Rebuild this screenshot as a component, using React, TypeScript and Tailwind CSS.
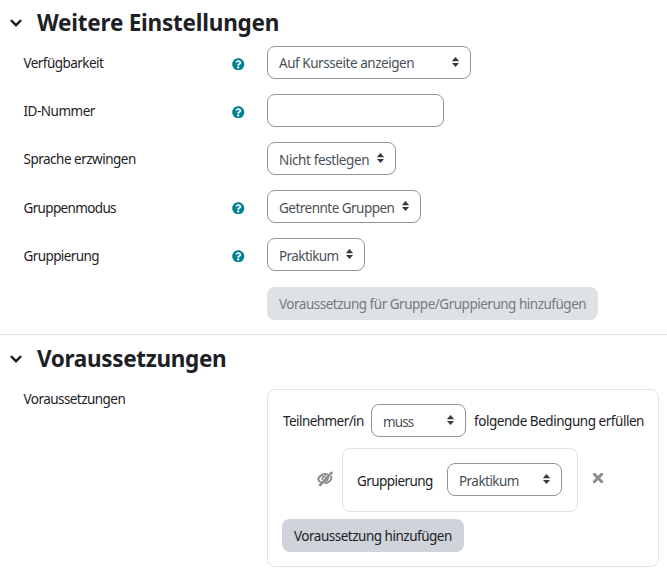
import type { ReactNode } from 'react';
import clsx from 'clsx';
import { FaQuestionCircle } from 'react-icons/fa';

type FieldProps = {
  label: string;
  labelClass: string;
  help?: boolean;
  children: ReactNode;
};

function SortArrows() {
  return (
    <svg viewBox="0 0 7 10" className="w-[7px] h-[10px] shrink-0 relative -top-px" fill="#343a40">
      <path d="M3.5 0 L7.2 4.3 H-0.2 Z" />
      <path d="M-0.2 5.9 H7.2 L3.5 10 Z" />
    </svg>
  );
}

function SelectBox({ value, className, textClass }: { value: string; className: string; textClass: string }) {
  return (
    <button
      className={clsx(
        'h-[33px] shrink-0 border border-[#8f959e] rounded-lg bg-white pl-[11px] pr-[11px] flex items-center justify-between text-[#495057]',
        className
      )}
    >
      <span className={clsx('whitespace-nowrap', textClass)}>{value}</span>
      <SortArrows />
    </button>
  );
}

function SectionTitle({ title, className }: { title: string; className: string }) {
  return (
    <div className="flex items-center h-8">
      <svg viewBox="0 0 12 8" className="w-3 h-2 ml-[10px] mr-[15px]" fill="none" stroke="#1d2125" strokeWidth="2.4">
        <path d="M0.9 1.2 L6 6.2 L11.1 1.2" />
      </svg>
      <h3 className={clsx('font-bold text-[#1d2125] whitespace-nowrap', className)}>{title}</h3>
    </div>
  );
}

function Field({ label, labelClass, help, children }: FieldProps) {
  return (
    <div className="flex items-center h-[33px]">
      <div className="w-[232px] pl-[23.5px]">
        <span className={clsx('whitespace-nowrap', labelClass)}>{label}</span>
      </div>
      <div className="w-[35px]">
        {help && <FaQuestionCircle className="w-[12.5px] h-[12.5px] text-[#008196] relative top-[1.5px]" />}
      </div>
      {children}
    </div>
  );
}

function HiddenEye() {
  return (
    <svg viewBox="0 0 16 16" className="w-4 h-4 relative -top-px" fill="none" stroke="#8c8c8c">
      <path d="M11 3.6 C7 2 2.5 4 1.2 8.3 C1.6 9.8 2.6 10.8 4 11.4" strokeWidth="2" />
      <path d="M14 5.2 C15.4 8.5 12 12 7.4 12.2" strokeWidth="2" />
      <path d="M5.4 9 C4.8 6.6 6.6 5 8.8 5.4" strokeWidth="1.7" />
      <path d="M2.4 14.9 L15.2 1" strokeWidth="2.4" />
      <path d="M8 10.3 C9.8 10 11 8.8 11.2 7" strokeWidth="1.6" />
    </svg>
  );
}

function RemoveCross() {
  return (
    <svg viewBox="0 0 12 12" className="w-3 h-3 ml-[13.5px] relative -top-0.5" stroke="#8c8c8c" strokeWidth="3" strokeLinecap="round">
      <path d="M2.3 2.3 L9.7 9.7 M9.7 2.3 L2.3 9.7" />
    </svg>
  );
}

export default function App() {
  return (
    <div className="w-[667px] h-[572px] bg-white overflow-hidden font-['Noto_Sans','Open_Sans',sans-serif] text-[13.5px] leading-5 text-[#1d2125]">
      <section className="h-[334px] pt-[7px]">
        <SectionTitle title="Weitere Einstellungen" className="text-[22.5px] tracking-[-0.23px]" />
        <div className="flex flex-col gap-[15px] mt-[7px]">
          <Field label="Verfügbarkeit" labelClass="tracking-[-0.55px]" help>
            <SelectBox value="Auf Kursseite anzeigen" className="w-[204px]" textClass="tracking-[-0.45px]" />
          </Field>
          <Field label="ID-Nummer" labelClass="tracking-[-0.5px]" help>
            <input className="w-[177px] h-[33px] border border-[#8f959e] rounded-lg" />
          </Field>
          <Field label="Sprache erzwingen" labelClass="tracking-[-0.5px]">
            <SelectBox value="Nicht festlegen" className="w-[129px]" textClass="relative top-px tracking-[-0.38px]" />
          </Field>
          <Field label="Gruppenmodus" labelClass="relative top-px tracking-[-0.65px]" help>
            <SelectBox value="Getrennte Gruppen" className="w-[154px]" textClass="relative top-px tracking-[-0.52px]" />
          </Field>
          <Field label="Gruppierung" labelClass="relative top-px tracking-[-0.6px]" help>
            <SelectBox value="Praktikum" className="w-[98px]" textClass="relative top-px tracking-[-0.57px]" />
          </Field>
        </div>
        <button className="ml-[267px] mt-4 w-[331px] h-[33px] pl-3 text-left rounded-lg bg-[#dee2e6] text-[#777a7d]">
          <span className="whitespace-nowrap tracking-[-0.49px]">Voraussetzung für Gruppe/Gruppierung hinzufügen</span>
        </button>
      </section>

      <section className="border-t border-[#dee2e6] pt-2">
        <SectionTitle title="Voraussetzungen" className="text-[22.5px] tracking-[-0.33px]" />
        <div className="flex mt-[14px]">
          <div className="w-[267px] pl-[23.5px]">
            <span className="tracking-[-0.55px]">Voraussetzungen</span>
          </div>
          <div className="w-[392px] h-[178px] border border-[#dee2e6] rounded-lg pl-[14px] pt-[14px]">
            <div className="flex items-center">
              <span className="w-[89px] pl-px whitespace-nowrap tracking-[-0.56px]">Teilnehmer/in</span>
              <SelectBox value="muss" className="w-[95px]" textClass="relative top-px tracking-[-0.9px]" />
              <span className="ml-2 whitespace-nowrap tracking-[-0.46px]">folgende Bedingung erfüllen</span>
            </div>
            <div className="flex items-center mt-[11px] pl-[35px]">
              <HiddenEye />
              <div className="flex items-center ml-[9px] w-[236px] h-16 border border-[#dee2e6] rounded-lg pl-[14px]">
                <span className="w-[90px] relative top-px tracking-[-0.57px]">Gruppierung</span>
                <SelectBox value="Praktikum" className="w-[115px] -mt-px" textClass="relative top-px tracking-[-0.55px]" />
              </div>
              <RemoveCross />
            </div>
            <button className="mt-[7px] w-[182px] h-[33px] pl-3 text-left rounded-lg bg-[#ced4da]">
              <span className="whitespace-nowrap tracking-[-0.49px]">Voraussetzung hinzufügen</span>
            </button>
          </div>
        </div>
      </section>
    </div>
  );
}
